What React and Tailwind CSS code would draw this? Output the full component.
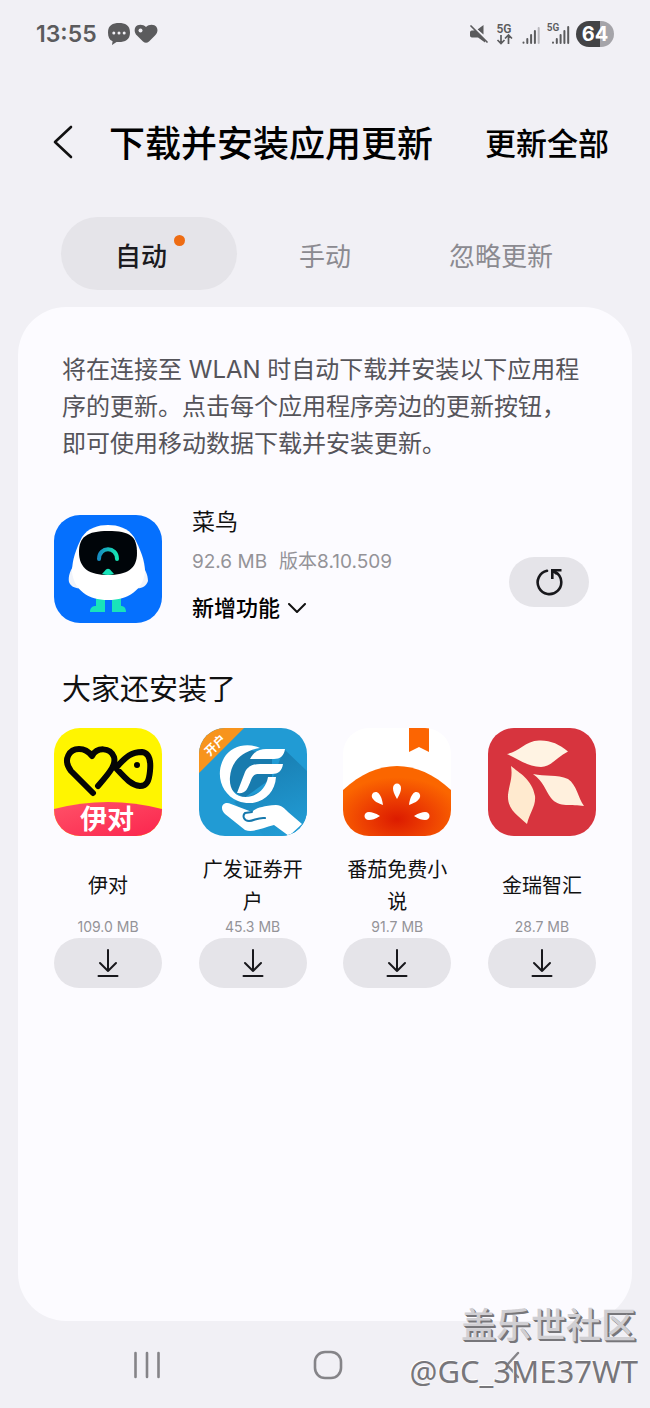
import { useState } from "react";

function ChatIcon() {
  return (
    <svg viewBox="0 0 22 22" className="h-[22px] w-[22px]" aria-hidden="true">
      <path d="M11 0C17 0 22 2 22 9.500C22 17 17 19 11 19H8.500L4 22L4.600 18.200C1.300 16.800 0 14 0 9.500C0 2 5 0 11 0Z" fill="#5b5b5d" />
      <circle cx="5.800" cy="10" r="1.500" fill="#f1f0f5" />
      <circle cx="11" cy="10" r="1.500" fill="#f1f0f5" />
      <circle cx="16.200" cy="10" r="1.500" fill="#f1f0f5" />
    </svg>
  );
}

function HeartIcon() {
  return (
    <svg viewBox="0 0 24 20" className="h-5 w-6" aria-hidden="true">
      <path d="M12 3C15-.2 20.500 0 22.500 3C24.300 6 23.500 9 21 11.500L15 17.500C13 19.300 11 19.300 9 17.500L3 11.500C.5 9 0 5.500 1.500 3C3.500 0 9-.2 12 3Z" fill="#5b5b5d" />
      <circle cx="6.500" cy="6.500" r="2" fill="#f1f0f5" />
    </svg>
  );
}

function MuteIcon() {
  return (
    <svg viewBox="0 0 18 18" className="mr-0.5 h-[18px] w-[18px]" aria-hidden="true">
      <path d="M0 7.500C0 6 1 5.500 3 5.500L5 5.300L15 15V17.500L8 12.500H3C1 12.500 0 12 0 10.500Z M7.500 4.500L13.500 0V9.500Z" fill="#5b5b5d" />
      <path d="M2.500 0.500L17.500 15.500" stroke="#f1f0f5" strokeWidth="1.500" />
      <path d="M1 1L17 17" stroke="#5b5b5d" strokeWidth="1.700" strokeLinecap="round" />
    </svg>
  );
}

function DataIcon() {
  return (
    <svg viewBox="0 0 18 26" className="mr-0.5 h-[26px] w-[18px]" aria-hidden="true">
      <text x="8" y="12" textAnchor="middle" fontSize="12" fontWeight="600" fontFamily="Roboto, sans-serif" fill="#5b5b5d">5G</text>
      <path d="M5 14V22M1.500 19L5 22.500L8.500 19M12.500 23V14.500M9 17.500L12.500 14L16 17.500" fill="none" stroke="#5b5b5d" strokeWidth="1.700" />
    </svg>
  );
}

function SignalIcon() {
  return (
    <svg viewBox="0 0 18 22" className="h-[22px] w-[18px]" aria-hidden="true">
      <g strokeWidth="2" strokeLinecap="round" stroke="#5b5b5d">
        <path d="M1.500 19.500V19.800M5.300 16V20M9.100 12V20M12.900 8V20" />
        <path d="M16.700 5V20" stroke="#b8b7bc" />
      </g>
    </svg>
  );
}

function Signal5GIcon() {
  return (
    <svg viewBox="0 0 24 26" className="h-[26px] w-6" aria-hidden="true">
      <text x="7" y="10" textAnchor="middle" fontSize="10" fontWeight="600" fontFamily="Roboto, sans-serif" fill="#5b5b5d">5G</text>
      <path d="M7 21.500V21.800M10.800 18V22M14.600 14V22M18.400 10V22M22.200 6V22" strokeWidth="2" strokeLinecap="round" stroke="#5b5b5d" />
    </svg>
  );
}

function StatusBar() {
  return (
    <header className="flex h-[68px] items-center justify-between pl-9 pr-9 text-[#5b5b5d]">
      <div className="flex items-center gap-2">
        <time className="w-[64px] text-[23px] font-semibold">13:55</time>
        <ChatIcon />
        <span className="-ml-1"><HeartIcon /></span>
      </div>
      <div className="flex items-center gap-1.5">
        <MuteIcon />
        <DataIcon />
        <SignalIcon />
        <Signal5GIcon />
        <span className="flex h-[26px] w-[38px] items-center justify-center rounded-full bg-linear-to-r from-[#434345] from-64% to-[#a5a4a9] to-64% text-[20px] font-bold text-white">64</span>
      </div>
    </header>
  );
}

function CainiaoIcon() {
  return (
    <svg viewBox="0 0 108 108" className="mt-1.5 block h-[108px] w-[108px] rounded-[26px]" role="img" aria-label="菜鸟">
      <defs>
        <linearGradient id="smile" x1="0" x2="1"><stop stopColor="#168cc0" /><stop offset="1" stopColor="#16e5b4" /></linearGradient>
      </defs>
      <rect width="108" height="108" fill="#0570fe" />
      <path d="M42 82H51V97H36C36 92 39 91 42 91ZM58 82H67V91C70 91 72 93 72 97H58Z" fill="#19e3ba" />
      <path d="M22 48C16 54 14 62 15 67C17 72 22 74 28 73L81 73C87 74 92 72 94 66C94 60 91 53 86 48Z" fill="#f1f4fa" />
      <path d="M54 10C64 10 74 13 80 22C86 34 91 45 91 57C89 75 74 85 54 85C34 85 20 75 18 57C18 45 22 34 28 22C34 13 44 10 54 10Z" fill="#fff" />
      <path d="M54 16C76 16 83 21 83 38C83 54 73 60 54 60C36 60 25 54 25 37C25 22 33 16 54 16Z" fill="#000509" />
      <path d="M45 44C45 31 63 31 63 44" fill="none" stroke="url(#smile)" strokeWidth="4" strokeLinecap="round" />
      <path d="M48 59L52 54.500Q54 53 56 54.500L60 59Q54 61 48 59Z" fill="#19e3ba" />
    </svg>
  );
}

function YiduiIcon() {
  return (
    <svg viewBox="0 0 108 108" className="block h-[108px] w-[108px] rounded-[26px]" role="img" aria-label="伊对">
      <defs><linearGradient id="rose" x1="0" x2="1" y2="1"><stop stopColor="#ff5268" /><stop offset="1" stopColor="#fb254e" /></linearGradient></defs>
      <rect width="108" height="108" fill="#fff500" />
      <path d="M0 81Q54 67 108 81V108H0Z" fill="url(#rose)" />
      <path d="M39 65L17 43C8 31 16 21 25 21C31 21 35 24 38 28C43 19 56 19 60 29C62 36 58 42 44 58M62 40C72 28 78 24 88 24C96 25 97 33 96 43C95 53 93 58 86 58C77 57 72 51 60 38" fill="none" stroke="#050505" strokeWidth="6" strokeLinecap="round" strokeLinejoin="round" />
      <circle cx="83" cy="37" r="3" />
      <text x="53" y="101" textAnchor="middle" fontSize="27" fontWeight="700" fontFamily="Noto Sans CJK SC, sans-serif" fill="#fff">伊对</text>
    </svg>
  );
}

function GuangfaIcon() {
  return (
    <svg viewBox="0 0 108 108" className="block h-[108px] w-[108px] rounded-[26px]" role="img" aria-label="广发证券">
      <defs>
        <linearGradient id="shade" x1=".3" y1="0" x2=".6" y2="1"><stop stopColor="#187bae" /><stop offset="1" stopColor="#219bd4" /></linearGradient>
      </defs>
      <rect width="108" height="108" fill="#219bd4" />
      <path d="M85 21L108 43V108H65L35 74L70 60Z" fill="url(#shade)" />
      <path d="M46 20A30 30 0 0 0 31 61L45 70L73 50V30Z" fill="#187bae" />
      <path d="M0 0H45L0 45Z" fill="#f7941d" />
      <text x="0" y="0" transform="translate(17 18) rotate(-45)" textAnchor="middle" dominantBaseline="middle" fontSize="12" fontWeight="700" fontFamily="Noto Sans CJK SC, sans-serif" fill="#fff">开户</text>
      <path d="M61 20C48 14 32 18 25 30C16 46 22 66 39 73C57 80 76 69 77 49H69C67 62 56 69 47 69C35 69 30 60 31 49C32 34 43 23 61 20Z" fill="#fff" />
      <path d="M51 31C55 23 61 21 67 21H86C85 28 81 31 75 31ZM38 65L46 44C49 38 54 36 61 36H84C83 43 79 46 73 46H60C55 46 54 48 52 52C48 62 47 66 38 65Z" fill="#fff" />
      <path d="M23 80C23 75 28 74 32 76L53 84C57 80 63 78 77 77C83 77 86 81 89 84L103 96L90 108L75 97C63 100 54 105 46 102L26 86C24 84 23 82 23 80Z" fill="#fff" />
      <path d="M53 84L46 85C43 88 45 93 50 93C55 93 59 89 66 90" fill="none" stroke="#1678ac" strokeWidth="2" strokeLinecap="round" strokeLinejoin="round" />
    </svg>
  );
}

function FanqieIcon() {
  return (
    <svg viewBox="0 0 108 108" className="block h-[108px] w-[108px] rounded-[26px]" role="img" aria-label="番茄免费小说">
      <defs>
        <radialGradient id="tomato" cx=".5" cy=".76" r=".6"><stop stopColor="#dc1b00" /><stop offset=".5" stopColor="#ed3f02" /><stop offset="1" stopColor="#fb6600" /></radialGradient>
      </defs>
      <rect width="108" height="108" fill="#fff" />
      <path d="M66 0H86V24L76 19L66 24Z" fill="#fc6502" />
      <path d="M0 62C34 30 74 30 108 62V108H0Z" fill="url(#tomato)" />
      <g fill="#fff">
        <path d="M54 71C51 66 50 63 50 60C50 54 58 54 58 60C58 63 57 66 54 71Z" />
        <path d="M54 71C51 66 50 63 50 60C50 54 58 54 58 60C58 63 57 66 54 71Z" transform="translate(-14 6) rotate(-39 54 71)" />
        <path d="M54 71C51 66 50 63 50 60C50 54 58 54 58 60C58 63 57 66 54 71Z" transform="translate(12 6) rotate(39 54 71)" />
        <path d="M54 71C51 66 50 63 50 60C50 54 58 54 58 60C58 63 57 66 54 71Z" transform="translate(-17 17) rotate(-90 54 71)" />
        <path d="M54 71C51 66 50 63 50 60C50 54 58 54 58 60C58 63 57 66 54 71Z" transform="translate(17 17) rotate(90 54 71)" />
      </g>
    </svg>
  );
}

function JinruiIcon() {
  return (
    <svg viewBox="0 0 108 108" className="block h-[108px] w-[108px] rounded-[26px]" role="img" aria-label="金瑞智汇">
      <rect width="108" height="108" fill="#d7343e" />
      <path d="M19 26C31 24 37 13 51 12.500C62 12 71 16 80 23.500C69 29 63 39 53 39C40 39 31 31 19 26Z" fill="#fff3e3" />
      <path d="M23 38C31 45 44 51 47 68C48 78 42 84 39 96C31 88 19 82 20 67C21 57 25 50 23 38Z" fill="#ffeacf" />
      <path d="M45 46C57 49 69 46 80 51C89 57 90 70 96 78C84 76 71 80 63 70C57 62 56 54 45 46Z" fill="#fff0dd" />
    </svg>
  );
}

const tabs = ["自动", "手动", "忽略更新"];

const suggestions = [
  { name: "伊对", size: "109.0 MB", Icon: YiduiIcon },
  { name: "广发证券开户", size: "45.3 MB", Icon: GuangfaIcon },
  { name: "番茄免费小说", size: "91.7 MB", Icon: FanqieIcon },
  { name: "金瑞智汇", size: "28.7 MB", Icon: JinruiIcon },
];

function Tabs() {
  const [active, setActive] = useState(0);
  return (
    <nav className="mx-[61px] grid grid-cols-3" role="tablist">
      {tabs.map((label, i) => (
        <button
          key={label}
          type="button"
          role="tab"
          aria-selected={i === active}
          onClick={() => setActive(i)}
          className={
            i === active
              ? "h-[73px] rounded-full bg-[#e5e4e9] pt-1.5 text-[26px] font-medium text-[#1b1a20]"
              : "h-[73px] rounded-full pt-1.5 text-[26px] text-[#8b8a90]"
          }
        >
          <span className={i === 0 ? "relative mr-4" : ""}>
            {label}
            {i === 0 && <span className="absolute -top-1.5 -right-[18px] h-[11px] w-[11px] rounded-full bg-[#ee6c13]" />}
          </span>
        </button>
      ))}
    </nav>
  );
}

function UpdateItem() {
  return (
    <article className="mt-11 flex items-center px-9">
      <CainiaoIcon />
      <div className="ml-[30px] flex-1">
        <h2 className="text-[23px] leading-8 text-[#111]">菜鸟</h2>
        <p className="mt-2 flex gap-3 text-[19px] leading-8 text-[#949398]">
          <span>92.6 MB</span>
          <span>版本8.10.509</span>
        </p>
        <button type="button" className="mt-3 flex items-center gap-2 text-[22px] leading-9 font-medium text-black">
          新增功能
          <svg viewBox="0 0 18 10" className="h-[10px] w-[18px]" fill="none" stroke="#111" strokeWidth="2" strokeLinecap="round" strokeLinejoin="round" aria-hidden="true">
            <path d="M1 1L9 9L17 1" />
          </svg>
        </button>
      </div>
      <button type="button" aria-label="更新菜鸟" className="mt-8 mr-[7px] flex h-[50px] w-20 items-center justify-center rounded-full bg-[#e5e4e9]">
        <svg viewBox="0 0 28 28" className="h-7 w-7" fill="none" stroke="#18181c" strokeWidth="2.600" aria-hidden="true">
          <path d="M12 2.800A11.800 11.800 0 1 0 20.500 4.200" strokeLinecap="round" />
          <path d="M17.300 11V2.300H26.500M17.300 2.300L22 6" />
        </svg>
      </button>
    </article>
  );
}

function Suggestion({ name, size, Icon }) {
  return (
    <li className="flex w-[108px] flex-col items-center">
      <Icon />
      <h3 className="mt-[18px] flex h-16 items-center text-center text-[20px] leading-8 text-[#111]">{name}</h3>
      <p className="mb-0.5 text-[14px] leading-[18px] text-[#949398]">{size}</p>
      <button type="button" aria-label={`下载${name}`} className="flex h-[50px] w-full items-center justify-center rounded-full bg-[#e5e4e9]">
        <svg viewBox="0 0 22 30" className="h-[30px] w-[22px]" fill="none" stroke="#18181c" strokeWidth="2" strokeLinecap="round" strokeLinejoin="round" aria-hidden="true">
          <path d="M11 2V23M3 15L11 23L19 15M1.500 28H20.500" />
        </svg>
      </button>
    </li>
  );
}

function SystemNav() {
  return (
    <nav className="flex h-[87px] items-center pl-[133px]">
      <button type="button" aria-label="最近任务">
        <svg viewBox="0 0 28 28" className="h-7 w-7" stroke="#858488" strokeWidth="2.600" strokeLinecap="round" aria-hidden="true">
          <path d="M2.500 2V26M14 2V26M25.500 2V26" />
        </svg>
      </button>
      <button type="button" aria-label="主屏幕" className="ml-[152px]">
        <svg viewBox="0 0 30 30" className="h-[30px] w-[30px]" fill="none" stroke="#858488" strokeWidth="2.600" aria-hidden="true">
          <rect x="2" y="2" width="26" height="26" rx="10" />
        </svg>
      </button>
      <button type="button" aria-label="返回" className="ml-[162px]">
        <svg viewBox="0 0 15 28" className="h-7 w-[15px]" fill="none" stroke="#858488" strokeWidth="2.400" strokeLinecap="round" strokeLinejoin="round" aria-hidden="true">
          <path d="M13 2L2 14L13 26" />
        </svg>
      </button>
    </nav>
  );
}

export default function App() {
  return (
    <div className="relative flex min-h-screen flex-col bg-[#f1f0f5] font-[Inter,'Noto_Sans_CJK_SC',sans-serif]" lang="zh-CN">
      <StatusBar />
      <div className="mt-[46px] flex items-center pr-[41px] pl-[53px]">
        <button type="button" aria-label="返回" className="pb-1">
          <svg viewBox="0 0 20 36" className="h-9 w-5" fill="none" stroke="#111" strokeWidth="2.600" strokeLinecap="round" strokeLinejoin="round" aria-hidden="true">
            <path d="M18 3L2 18L18 33" />
          </svg>
        </button>
        <h1 className="ml-9 flex-1 text-[36px] leading-[60px] font-medium whitespace-nowrap text-black">下载并安装应用更新</h1>
        <button type="button" className="text-[31px] font-medium whitespace-nowrap text-black">更新全部</button>
      </div>
      <div className="mt-[43px]">
        <Tabs />
      </div>
      <main className="mx-[18px] mt-[17px] flex-1 rounded-[48px] bg-[#fcfbff] pt-11">
        <p className="pr-12 pl-11 text-[24px] leading-[37px] text-[#55545a]">
          将在连接至 WLAN 时自动下载并安装以下应用程序的更新。点击每个应用程序旁边的更新按钮，即可使用移动数据下载并安装更新。
        </p>
        <UpdateItem />
        <section>
          <h2 className="mt-11 pl-11 text-[29px] leading-10 text-[#111]">大家还安装了</h2>
          <ul className="mt-[18px] flex justify-between px-9">
            {suggestions.map((app) => (
              <Suggestion key={app.name} {...app} />
            ))}
          </ul>
        </section>
      </main>
      <SystemNav />
      <div className="pointer-events-none absolute right-3 bottom-3.5 text-right">
        <p className="pr-0.5 text-[35px] leading-[46px] font-medium text-[#d0cfd3] [text-shadow:1px_1px_0_#77767a,2px_2px_0_#77767a]">盖乐世社区</p>
        <p className="font-['Noto_Sans'] text-[31px] leading-[46px] text-[#77767a] [text-shadow:-1px_-1px_0_#ffffff]">@GC_3ME37WT</p>
      </div>
    </div>
  );
}
